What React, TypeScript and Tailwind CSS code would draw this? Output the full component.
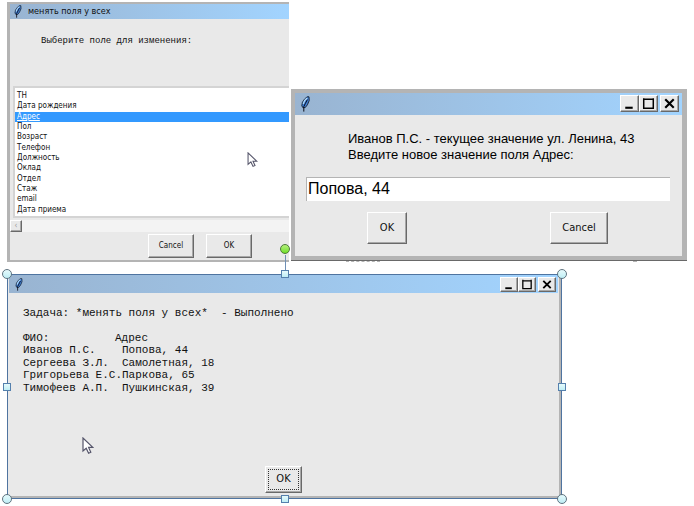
import { ReactNode } from "react";

const bevel =
  "border border-t-white border-l-white border-r-[#696969] border-b-[#696969] bg-[#e9e9e9] shadow-[inset_-1px_-1px_0_#a8a8a8]";

const fields = [
  "ТН",
  "Дата рождения",
  "Адрес",
  "Пол",
  "Возраст",
  "Телефон",
  "Должность",
  "Оклад",
  "Отдел",
  "Стаж",
  "email",
  "Дата приема",
];

const people = [
  ["Иванов П.С.", "Попова, 44"],
  ["Сергеева З.Л.", "Самолетная, 18"],
  ["Григорьева Е.С.", "Паркова, 65"],
  ["Тимофеев А.П.", "Пушкинская, 39"],
];

function Feather({ className }: { className: string }) {
  return (
    <svg viewBox="0 0 9 16" className={className} aria-hidden="true">
      <path d="M8 .8H6.2L3.6 3L1.4 6.4L.8 9.8L1.8 11.6H4.2L6.4 8.8L8.2 4.6Z" fill="#3f7fd6" stroke="#1c2a3c" strokeWidth="1" />
      <path d="M6.2 2L3.6 4.6L2.2 8" fill="none" stroke="#b4dcfa" strokeWidth="1.3" />
      <path d="M6.4 3.6L4.4 7.4L2.8 10.6V15.6" fill="none" stroke="#0a0a14" strokeWidth="1" />
    </svg>
  );
}

function Pointer({ className }: { className: string }) {
  return (
    <svg viewBox="0 0 12 18" className={className} aria-hidden="true">
      <path d="M1 1V14L4.2 11.2L6.6 16.2L8.8 15.2L6.6 10.4H10.8Z" fill="#fff" stroke="#55556a" strokeWidth="1.2" />
    </svg>
  );
}

function Caption({ className, children }: { className: string; children?: ReactNode }) {
  return (
    <header className={`flex items-center bg-linear-to-r from-[#99b4d1] to-[#a2d4ff] ${className}`}>
      {children}
    </header>
  );
}

function CaptionButtons({ size }: { size: string }) {
  return (
    <div className="ml-auto flex">
      <button aria-label="Свернуть" className={`${bevel} ${size}`}>
        <svg viewBox="0 0 16 14" className="h-full w-full"><path d="M4 11H11" stroke="#000" strokeWidth="2" /></svg>
      </button>
      <button aria-label="Развернуть" className={`${bevel} ${size}`}>
        <svg viewBox="0 0 16 14" className="h-full w-full"><path d="M3.5 2V11.5H12.5V2M3 3H13" fill="none" stroke="#000" strokeWidth="1.4" /></svg>
      </button>
      <button aria-label="Закрыть" className={`ml-[2px] ${bevel} ${size}`}>
        <svg viewBox="0 0 16 14" className="h-full w-full"><path d="M4 3L12 11M12 3L4 11" stroke="#000" strokeWidth="2" /></svg>
      </button>
    </div>
  );
}

function Round({ className }: { className: string }) {
  return (
    <span
      className={`absolute size-[10px] rounded-full border border-[#5f7380] bg-linear-to-b from-[#e6fafc] to-[#bfeef5] ${className}`}
    />
  );
}

function Square({ className }: { className: string }) {
  return (
    <span className={`absolute size-2 border border-[#5580ad] bg-linear-to-b from-[#e6fafc] to-[#bfeef5] ${className}`} />
  );
}

export default function App() {
  return (
    <main className="overflow-hidden bg-white pt-[2px] pr-[7px] pb-[6px] pl-[7px] font-['DejaVu_Sans_Condensed','DejaVu_Sans',sans-serif] text-[#111]">
      <div className="flex items-end">
        <section className="flex w-[282px] shrink-0 flex-col border-t-2 border-b-2 border-l-[3px] border-[#b4b4b4] bg-[#e9e9e9] pb-[2px]">
          <Caption className="h-[15px] gap-[6px] pl-1 text-[9px]">
            <Feather className="h-[13px] w-2" />
            <h1>менять поля у всех</h1>
          </Caption>
          <p className="h-[67px] pt-4 pl-[31px] font-['Liberation_Mono',monospace] text-[9px]">
            Выберите поле для изменения:
          </p>
          <div className="relative ml-[3px] border-t-2 border-b-2 border-l-2 border-[#d4d4d4] bg-white pt-[3px] pb-px">
            <ul role="listbox" aria-label="Поле для изменения" className="grid h-[124px] grid-rows-12 text-[8px] leading-[10px]">
              {fields.map((f) => (
                <li
                  key={f}
                  role="option"
                  aria-selected={f === "Адрес"}
                  className="pl-[2px] aria-selected:bg-[#3399ff] aria-selected:text-white aria-selected:underline"
                >
                  {f}
                </li>
              ))}
            </ul>
            <Pointer className="absolute top-[64px] left-[232px] h-4 w-[11px]" />
          </div>
          <div className="mt-[2px] flex h-3 bg-[#f3f3f3]">
            <button aria-label="Прокрутить влево" className={`flex w-3 items-center justify-center text-[8px] leading-none text-[#999] ${bevel}`}>
              ‹
            </button>
          </div>
          <div className="mt-[2px] flex justify-end gap-3 pr-[37px] text-[8px]">
            <button className={`h-6 w-[46px] ${bevel}`}>Cancel</button>
            <button className={`h-6 w-[46px] ${bevel}`}>OK</button>
          </div>
        </section>

        <section className="relative mb-px ml-[2px] min-w-0 flex-1 border-b border-[#696969]">
          <div className="border-4 border-r-[5px] border-[#b4b4b4] bg-[#e9e9e9] pb-3">
            <Caption className="h-[22px] pr-[3px] pl-[6px]">
              <Feather className="h-4 w-[9px]" />
              <CaptionButtons size="h-[17px] w-[19px]" />
            </Caption>
            <label htmlFor="value" className="mt-4 block pl-[53px] font-['Liberation_Sans',Arial,sans-serif] text-[13px] leading-4 whitespace-nowrap text-black">
              Иванов П.С. - текущее значение ул. Ленина, 43
              <br />
              Введите новое значение поля Адрес:
            </label>
            <div className="mt-[14px] pr-3 pl-[11px]">
              <input
                id="value"
                defaultValue="Попова, 44"
                className="h-6 w-full border-t border-l border-[#b4b4b4] bg-white pl-px font-['Liberation_Sans',Arial,sans-serif] text-[16px] text-black outline-none"
              />
            </div>
            <div className="mt-[11px] flex justify-between pr-[74px] pl-[72px] text-[11px]">
              <button className={`h-8 w-10 ${bevel}`}>OK</button>
              <button className={`h-8 w-[58px] ${bevel}`}>Cancel</button>
            </div>
          </div>
          <span className="absolute -bottom-[2px] left-[55px] w-[34px] border-b border-dashed border-[#b4b4b4]" />
          <span className="absolute right-[50px] -bottom-[2px] w-1 border-b border-[#b4b4b4]" />
        </section>
      </div>

      <section className="relative mt-3 mr-[125px] border border-[#4f74a0]">
        <div className="border-r-2 border-b-2 border-[#b4b4b4] bg-[#e9e9e9] pb-[3px]">
          <Caption className="mr-px ml-px h-[18px] pr-[2px] pl-[6px]">
            <Feather className="h-[13px] w-2" />
            <CaptionButtons size="h-[15px] w-[18px]" />
          </Caption>
          <div className="pt-[14px] pl-[15px] font-['Liberation_Mono',monospace] text-[11px] leading-[12px]">
            <p className="h-[25px] whitespace-pre">{"Задача: *менять поля у всех*  - Выполнено"}</p>
            <table className="h-[62px] w-full table-fixed border-collapse whitespace-nowrap">
              <thead>
                <tr>
                  <th className="w-[92px] p-0 text-left font-normal">ФИО:</th>
                  <th className="p-0 text-left font-normal">Адрес</th>
                </tr>
              </thead>
              <tbody>
                {people.map(([name, address]) => (
                  <tr key={name}>
                    <td className="p-0">{name}</td>
                    <td className="py-0 pr-0 pl-[7px]">{address}</td>
                  </tr>
                ))}
              </tbody>
            </table>
          </div>
          <div className="mt-[72px] flex justify-center">
            <button className={`h-[27px] w-[37px] p-[2px] text-[11px] ${bevel}`}>
              <span className="flex h-full items-center justify-center border border-dotted border-[#333]">OK</span>
            </button>
          </div>
        </div>
        <Pointer className="absolute top-[162px] left-[74px] h-[18px] w-3" />
        <span className="absolute -top-5 left-1/2 h-5 w-px bg-[#6f8fb5]" />
        <span className="absolute -top-[31px] left-1/2 size-[10px] -translate-x-1/2 rounded-full border border-[#4d7a3a] bg-linear-to-b from-[#b4f07a] to-[#6fe01e]" />
        <Round className="-top-[6px] -left-[6px]" />
        <Round className="-top-[6px] -right-[6px]" />
        <Round className="-bottom-[6px] -left-[6px]" />
        <Round className="-right-[6px] -bottom-[6px]" />
        <Square className="-top-[5px] left-1/2 -translate-x-1/2" />
        <Square className="-bottom-[5px] left-1/2 -translate-x-1/2" />
        <Square className="top-1/2 -left-[5px] -translate-y-1/2" />
        <Square className="top-1/2 -right-[5px] -translate-y-1/2" />
      </section>
    </main>
  );
}
